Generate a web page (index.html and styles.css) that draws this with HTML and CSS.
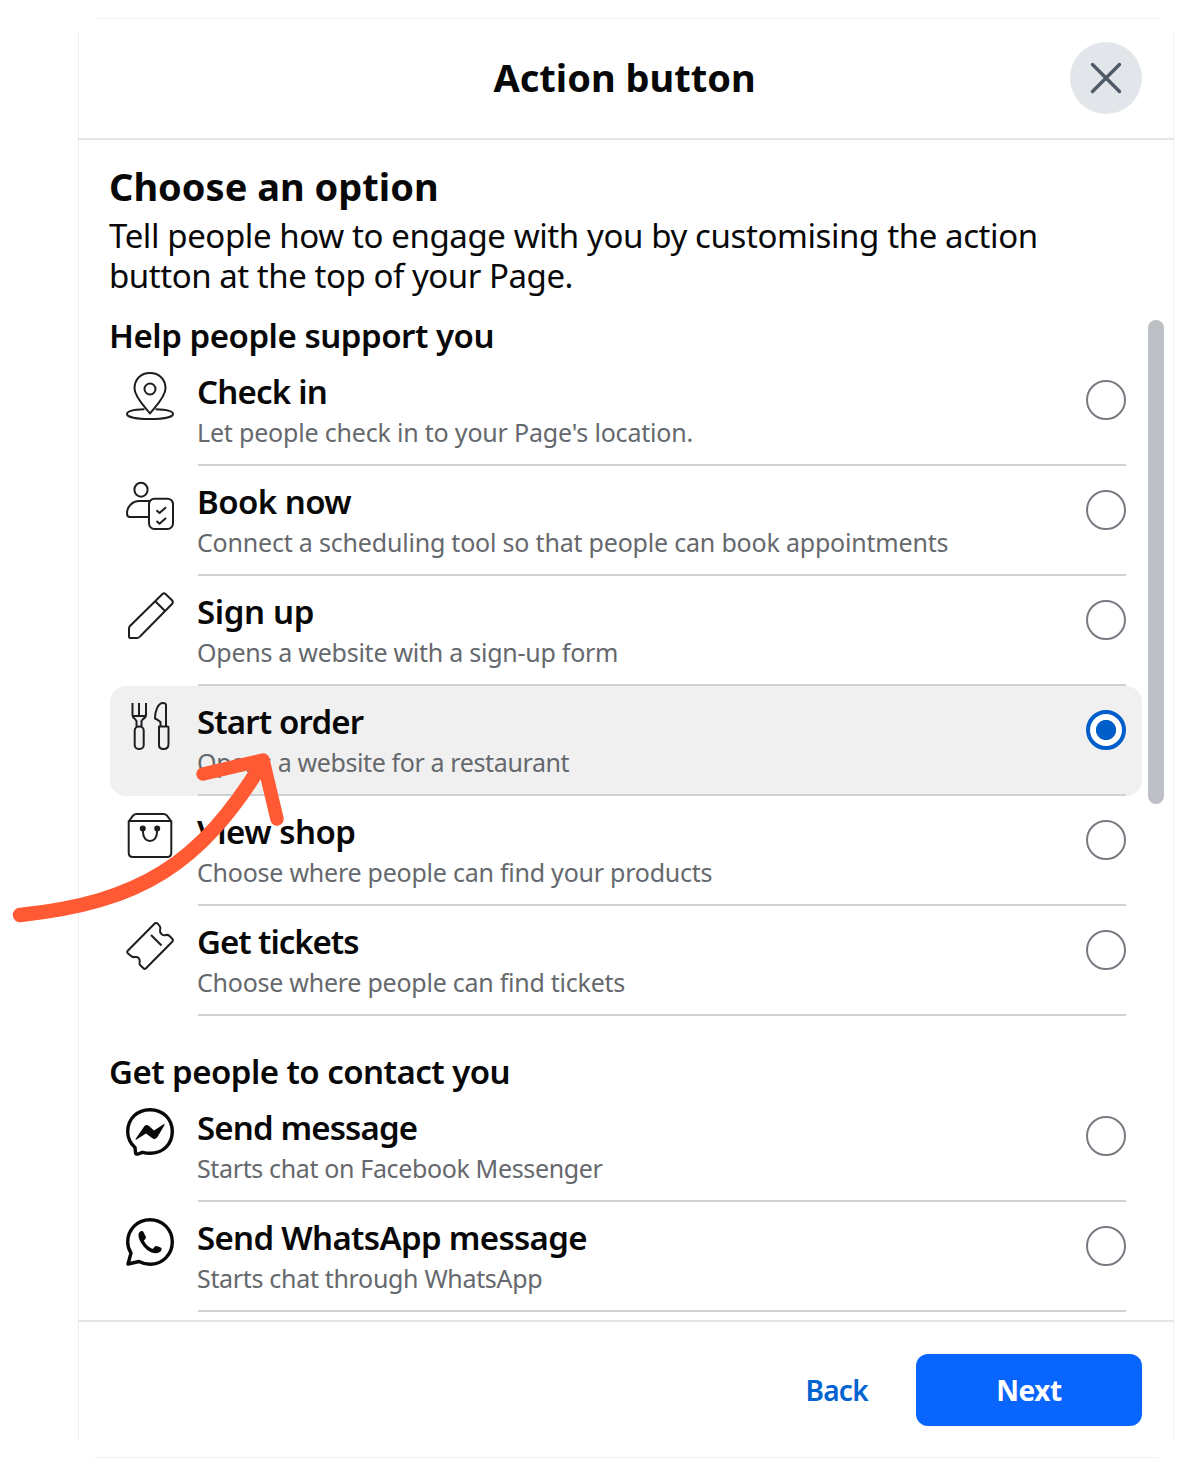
FILE: index.html
```html
<!DOCTYPE html>
<html lang="en">
<head>
<meta charset="utf-8">
<title>Action button</title>
<link rel="stylesheet" href="styles.css">
</head>
<body>
<main class="dialog">
  <header class="header">
    <h1 class="title">Action button</h1>
    <button class="close" aria-label="Close"><svg width="72" height="72" viewBox="0 0 72 72"><path d="M22.500 22.500L49.500 49.500M49.500 22.500L22.500 49.500" stroke="#505a67" stroke-width="3.400" stroke-linecap="round"/></svg></button>
  </header>
  <section class="content">
    <h2 class="choose">Choose an option</h2>
    <p class="intro"><span class="line l1">Tell people how to engage with you by customising the action</span> <span class="line l2">button at the top of your Page.</span></p>
    <div class="scroller">
      <div class="list">
        <h3 class="group g1">Help people support you</h3>
        <div class="row">
          <svg class="icon" viewBox="0 0 48 48"><path d="M24 41.500C19 35 8.500 25 8.500 16.500C8.500 7 15 1 24 1S39.500 7 39.500 16.500C39.500 25 29 35 24 41.500Z"/><circle cx="24" cy="17" r="5.500"/><path d="M18.500 37.200C8 37.500 1 39.200 1 42C1 45 11 47 24 47S47 45 47 42C47 39.200 40 37.500 29.500 37.200"/></svg>
          <div class="text"><b class="name n1">Check in</b><span class="desc d1">Let people check in to your Page's location.</span></div><i class="radio"></i>
        </div>
        <div class="row">
          <svg class="icon" viewBox="0 0 48 48"><ellipse cx="15" cy="7.700" rx="6.600" ry="7"/><path d="M22.500 35H4Q1 35 1 31.500C1 24 7 19 13 19H24"/><rect x="23" y="16.700" width="24" height="30.300" rx="5.500"/><path d="M30.500 28.300l3 2.700 6.500-5.800M30.500 39l3 2.700 6.500-5.800"/></svg>
          <div class="text"><b class="name n2">Book now</b><span class="desc d2">Connect a scheduling tool so that people can book appointments</span></div><i class="radio"></i>
        </div>
        <div class="row">
          <svg class="icon" viewBox="0 0 48 48"><path d="M3 36.500Q3 35 4 34L36.500 2Q38 .6 39.500 2L46 8.200Q47.700 10 46 12L14.500 44Q13 46 11 46H4.200Q3 46 3 44.800ZM29.500 9.500L38.500 18.500"/></svg>
          <div class="text"><b class="name n3">Sign up</b><span class="desc d3">Opens a website with a sign-up form</span></div><i class="radio"></i>
        </div>
        <div class="row selected">
          <svg class="icon" viewBox="0 0 48 48"><path d="M6.500 1V13Q6.500 15.500 9 17L10.500 19V24.500M20 1V13Q20 15.500 17 17L15.500 19V24.500M13 1V14.500M6.500 14H20"/><rect x="8.700" y="24.500" width="9" height="22.500" rx="4"/><path d="M40 24.500V2.500Q39.500 1 37 1C32 1 29 9 29 16.500Q31.500 17.500 34.500 20V24.500"/><path d="M33 24.500H41.500Q42.500 24.500 42.500 25.500V42Q42.500 47 37.500 47T33 42Z"/></svg>
          <div class="text"><b class="name n4">Start order</b><span class="desc d4">Opens a website for a restaurant</span></div><i class="radio"></i>
        </div>
        <div class="row">
          <svg class="icon" viewBox="0 0 48 48"><path d="M3 9L7 3.700Q8.500 2 10.500 2H37.500Q39.500 2 41 3.700L45 9M2.700 9H45.300V40.500Q45.300 45 41 45H7Q2.700 45 2.700 40.500ZM17 17V20C17 25.500 20 29 24 29S31 25.500 31 20V17"/><circle cx="16.800" cy="16.500" r="2" fill="#1c1e21"/><circle cx="31.200" cy="16.500" r="2" fill="#1c1e21"/></svg>
          <div class="text"><b class="name n5">View shop</b><span class="desc d5">Choose where people can find your products</span></div><i class="radio"></i>
        </div>
        <div class="row">
          <svg class="icon" viewBox="0 0 48 48"><path d="M30 1Q31.200 1 32 2L34 4.500Q34.800 6 34 8C33.500 11.500 37 14 40 13Q42 12.500 43.500 14L46.500 17Q47.500 18.200 46.500 19.500L20 46.300Q18.500 47.500 17.500 46.300L14 43Q13.200 42 13.700 39.500C14 36.500 12 34.500 9 35Q6.500 35.500 5 34L1.500 31Q.7 30 1.500 29L28.500 1.700Q29.200 1 30 1ZM25 13L35.500 23.500"/></svg>
          <div class="text"><b class="name n6">Get tickets</b><span class="desc d6">Choose where people can find tickets</span></div><i class="radio"></i>
        </div>
        <h3 class="group g2">Get people to contact you</h3>
        <div class="row">
          <svg class="icon heavy" viewBox="0 0 48 48"><path d="M24 1.700C11 1.700 1.700 11 1.700 23.500C1.700 30 4.500 35.500 9 39.500L9.500 44.500Q9.700 46.600 12 46L16.500 44.300C19 45 21.500 45.300 24 45.300C37 45.300 46.300 36 46.300 23.500S37 1.700 24 1.700Z"/><path class="solid" d="M9.500 31L18.500 18Q20.500 16 23 18L28 22.500 38 16Q39 15.800 38.500 17L31.500 29Q29 32.500 26 30L20 25.500 10.500 31.500Q9.500 32 9.500 31Z"/></svg>
          <div class="text"><b class="name n7">Send message</b><span class="desc d7">Starts chat on Facebook Messenger</span></div><i class="radio"></i>
        </div>
        <div class="row">
          <svg class="icon heavy" viewBox="0 0 48 48"><path d="M2 46L5 35C2.700 31.500 1.700 28 1.700 24C1.700 11.500 11.500 1.700 24 1.700S46.300 11.500 46.300 24S36.500 46.300 24 46.300C20 46.300 16.500 45.300 13 43.500Z"/><path class="solid" d="M12.500 17C12.500 14 15 12.500 17 13.200L20 19Q20 21 17.800 22.500C19.500 26.500 23 29.500 26.500 31L29.500 28Q31 27.600 35.500 30Q36 33 33 34.500C24 38.500 12.500 25 12.500 17Z"/></svg>
          <div class="text"><b class="name n8">Send WhatsApp message</b><span class="desc d8">Starts chat through WhatsApp</span></div><i class="radio"></i>
        </div>
      </div>
      <div class="thumb"></div>
    </div>
  </section>
  <footer class="footer"><button class="back">Back</button><button class="next">Next</button></footer>
</main>
<svg class="arrow" width="300" height="200" viewBox="0 740 300 200"><path d="M20 915C140 902 200 865 263 762" stroke-width="14.500"/><path d="M203 774L263 760L277 819" stroke-width="13.500"/></svg>
</body>
</html>
```

FILE: styles.css
```css
* { box-sizing: border-box; }
body {
  margin: 0; padding: 18px 24px 16px 78px; height: 1474px;
  position: relative; overflow: hidden; background: #fff; color: #080809;
  font-family: "Noto Sans", "Open Sans", sans-serif;
}
h1, h2, h3, p { margin: 0; white-space: nowrap; }
button { border: 0; padding: 0; font: inherit; background: none; }
.dialog {
  width: 1096px; height: 1440px; display: flex; flex-direction: column;
  background:
    linear-gradient(#f1f1f6, #f1f1f6) 16px 0 / 1066px 1px no-repeat,
    linear-gradient(#f1f1f4, #f1f1f4) 16px 100% / 1064px 1px no-repeat,
    linear-gradient(#efeff5, #efeff5) 0 14px / 1px 1408px no-repeat,
    linear-gradient(#efeff1, #efeff1) 100% 14px / 1px 1408px no-repeat;
}
.header {
  height: 122px; flex: none; border-bottom: 2px solid #e5e6e8;
  display: grid; grid-template-columns: 103px 1fr 104px; align-items: center;
}
.title { grid-column: 2; text-align: center; font-size: 38px; line-height: 50px; font-weight: 700; padding: 0 2px 2px 0; }
.close { width: 72px; height: 72px; border-radius: 50%; background: #e2e5e9; }
.close svg { display: block; }
.content { height: 1180px; flex: none; padding: 21px 10px 0 31px; overflow: hidden; }
.choose { font-size: 38px; line-height: 50px; font-weight: 700; }
.intro { font-size: 33px; line-height: 40px; padding: 5px 0 20px; }
.line { display: block; }
.l1 { letter-spacing: -.4px; }
.l2 { letter-spacing: -.46px; }
.scroller { display: flex; justify-content: space-between; padding-left: 1px; }
.list { width: 1032px; }
.group { font-size: 33px; line-height: 40px; font-weight: 600; margin-left: -1px; }
.g1 { letter-spacing: -.47px; }
.g2 { padding: 36px 0 0; letter-spacing: -.54px; }
.row { height: 110px; padding: 16px 16px 0; display: flex; border-radius: 16px; }
.selected { background: #f0f0f0; }
.icon { width: 48px; height: 48px; flex: none; fill: none; stroke: #1c1e21; stroke-width: 2; stroke-linejoin: round; overflow: visible; }
.heavy { stroke: #080809; stroke-width: 3.400; }
.solid { fill: #080809; stroke: none; }
.text { margin-left: 24px; flex: 1; height: 94px; border-bottom: 2px solid #ced2d6; white-space: nowrap; }
.name, .desc { display: block; line-height: 40px; margin-left: -1px; }
.name { font-size: 33px; font-weight: 600; }
.desc { font-size: 25px; color: #65686c; }
.n1 { letter-spacing: -.78px; }
.n2 { letter-spacing: -.55px; }
.n3 { letter-spacing: -.35px; }
.n4 { letter-spacing: -.85px; }
.n5 { letter-spacing: -.52px; }
.n6 { letter-spacing: -1.05px; }
.n7 { letter-spacing: -.86px; }
.n8 { letter-spacing: -.68px; }
.d1 { letter-spacing: -.19px; }
.d2 { letter-spacing: -.2px; }
.d3 { letter-spacing: -.26px; }
.d4 { letter-spacing: -.38px; }
.d5 { letter-spacing: -.24px; }
.d6 { letter-spacing: -.25px; }
.d7 { letter-spacing: -.36px; }
.d8 { letter-spacing: -.32px; }
.radio { width: 40px; height: 40px; margin: 8px 0 0 -40px; flex: none; border: 2.500px solid #787c82; border-radius: 50%; background: #fff; }
.selected .radio { border: 4px solid #005ecb; background: radial-gradient(circle, #005ecb 9.700px, #fff 10.500px); }
.thumb { width: 16px; height: 484px; margin-top: 4px; border-radius: 8px; background: #bcc0c4; }
.footer { height: 138px; border-top: 2px solid #e5e6e8; padding: 32px 32px 0 0; display: flex; justify-content: flex-end; gap: 48px; }
.back, .next { height: 72px; font-size: 28px; font-weight: 600; }
.back { color: #0064d1; letter-spacing: -.7px; }
.next { width: 226px; border-radius: 12px; background: #0866ff; color: #fff; font-weight: 700; letter-spacing: -.5px; }
.arrow { position: absolute; left: 0; top: 740px; fill: none; stroke: #ff5a33; stroke-linecap: round; stroke-linejoin: round; }
```
